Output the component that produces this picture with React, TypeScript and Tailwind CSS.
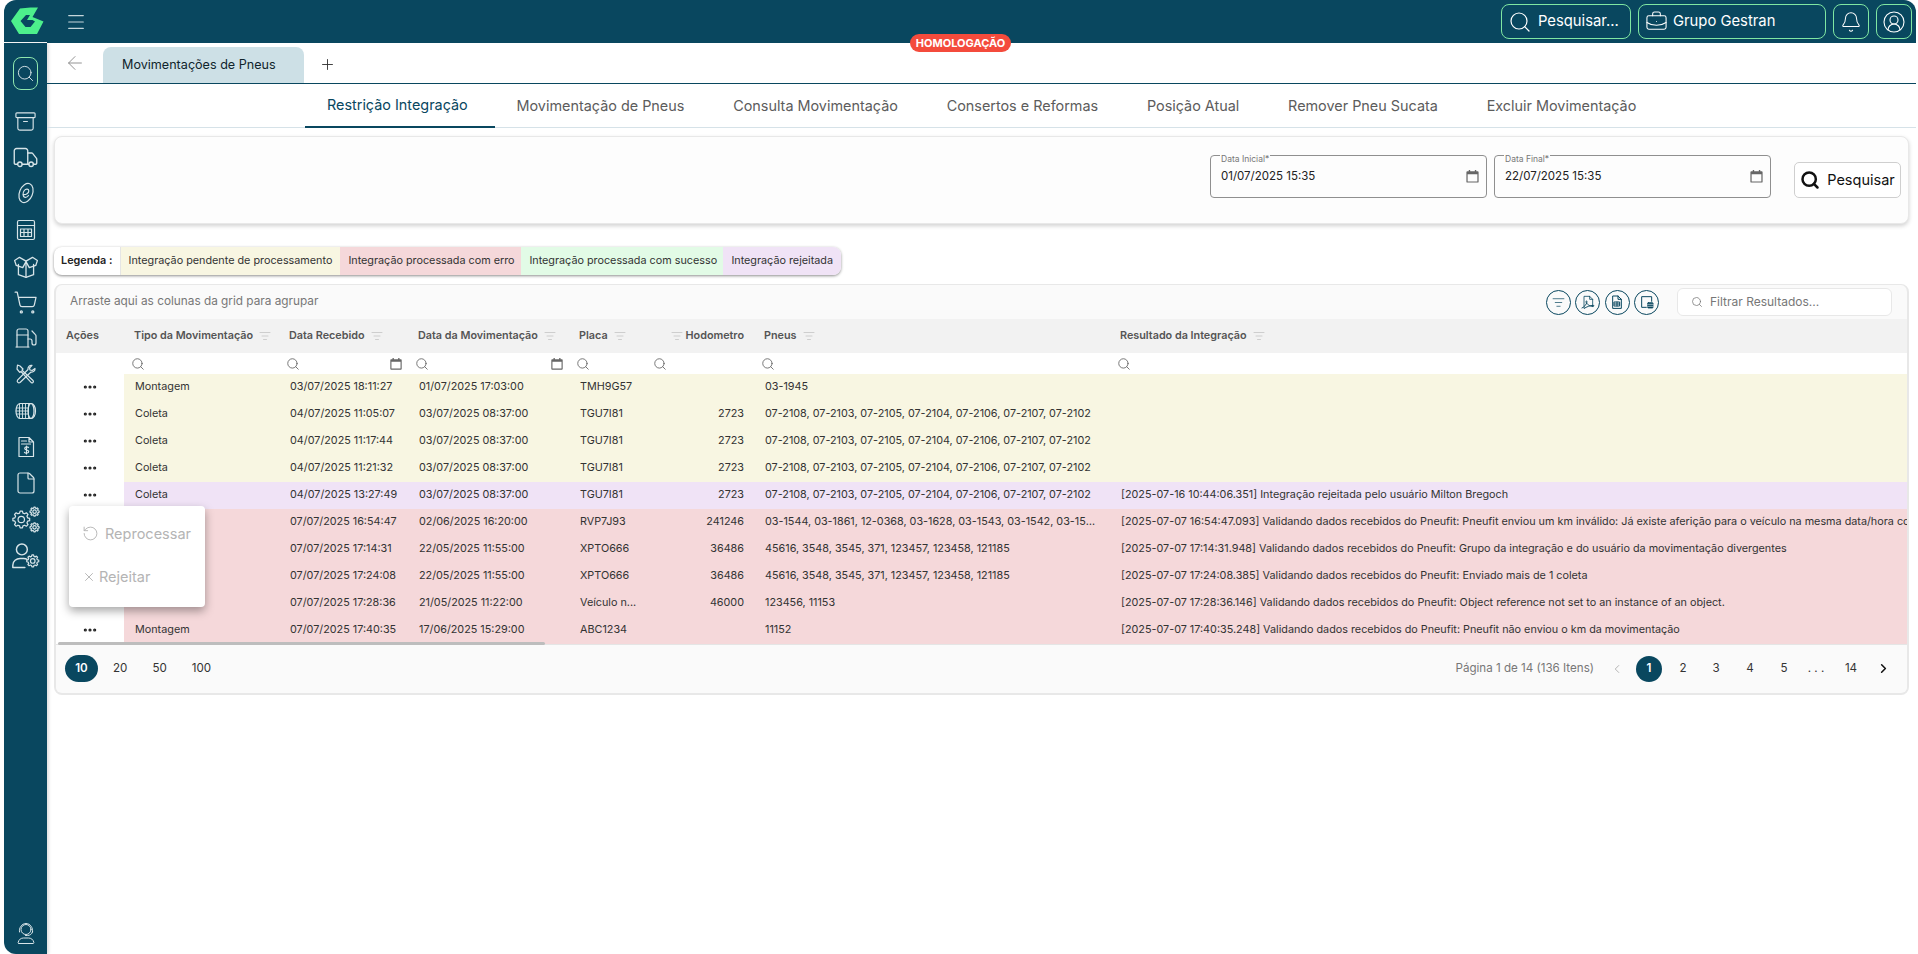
import {
  Archive,
  ArrowLeft,
  Bell,
  BriefcaseBusiness,
  ChevronLeft,
  ChevronRight,
  CircleUserRound,
  Ellipsis,
  File,
  Fuel,
  ListFilter,
  Menu,
  Plus,
  RotateCcw,
  Search,
  ShoppingCart,
  Truck,
  X,
} from "lucide-react";

const COLS = "grid grid-cols-[68px_155px_129px_161px_77px_108px_356px_1fr]";
const DATA_COLS = "grid grid-cols-[155px_129px_161px_77px_108px_356px_1fr]";

type Row = {
  tipo: string;
  rec: string;
  mov: string;
  placa: string;
  km: string;
  pneus: string;
  res: string;
  bg: string;
};

const P7 = "07-2108, 07-2103, 07-2105, 07-2104, 07-2106, 07-2107, 07-2102";
const P5 = "45616, 3548, 3545, 371, 123457, 123458, 121185";
const Y = "bg-[#f8f6e2]";
const V = "bg-[#f0e3f6]";
const R = "bg-[#f5d8da]";

const rows: Row[] = [
  { tipo: "Montagem", rec: "03/07/2025 18:11:27", mov: "01/07/2025 17:03:00", placa: "TMH9G57", km: "", pneus: "03-1945", res: "", bg: Y },
  { tipo: "Coleta", rec: "04/07/2025 11:05:07", mov: "03/07/2025 08:37:00", placa: "TGU7I81", km: "2723", pneus: P7, res: "", bg: Y },
  { tipo: "Coleta", rec: "04/07/2025 11:17:44", mov: "03/07/2025 08:37:00", placa: "TGU7I81", km: "2723", pneus: P7, res: "", bg: Y },
  { tipo: "Coleta", rec: "04/07/2025 11:21:32", mov: "03/07/2025 08:37:00", placa: "TGU7I81", km: "2723", pneus: P7, res: "", bg: Y },
  { tipo: "Coleta", rec: "04/07/2025 13:27:49", mov: "03/07/2025 08:37:00", placa: "TGU7I81", km: "2723", pneus: P7, res: "[2025-07-16 10:44:06.351] Integração rejeitada pelo usuário Milton Bregoch", bg: V },
  { tipo: "", rec: "07/07/2025 16:54:47", mov: "02/06/2025 16:20:00", placa: "RVP7J93", km: "241246", pneus: "03-1544, 03-1861, 12-0368, 03-1628, 03-1543, 03-1542, 03-1545, 03-1546", res: "[2025-07-07 16:54:47.093] Validando dados recebidos do Pneufit: Pneufit enviou um km inválido: Já existe aferição para o veículo na mesma data/hora com outro km", bg: R },
  { tipo: "", rec: "07/07/2025 17:14:31", mov: "22/05/2025 11:55:00", placa: "XPTO666", km: "36486", pneus: P5, res: "[2025-07-07 17:14:31.948] Validando dados recebidos do Pneufit: Grupo da integração e do usuário da movimentação divergentes", bg: R },
  { tipo: "", rec: "07/07/2025 17:24:08", mov: "22/05/2025 11:55:00", placa: "XPTO666", km: "36486", pneus: P5, res: "[2025-07-07 17:24:08.385] Validando dados recebidos do Pneufit: Enviado mais de 1 coleta", bg: R },
  { tipo: "", rec: "07/07/2025 17:28:36", mov: "21/05/2025 11:22:00", placa: "Veículo n...", km: "46000", pneus: "123456, 11153", res: "[2025-07-07 17:28:36.146] Validando dados recebidos do Pneufit: Object reference not set to an instance of an object.", bg: R },
  { tipo: "Montagem", rec: "07/07/2025 17:40:35", mov: "17/06/2025 15:29:00", placa: "ABC1234", km: "", pneus: "11152", res: "[2025-07-07 17:40:35.248] Validando dados recebidos do Pneufit: Pneufit não enviou o km da movimentação", bg: R },
];

function Logo() {
  return (
    <svg width="33" height="28" viewBox="0 0 33 28">
      <path d="M0 14 9 1.5 19.5.5H27L21.500 10 32.500 14.500 26 27H8Z" fill="#4df08c" />
      <path d="M9.500 14 15 8h4l-3 5h5.500L24 14.500 19.500 20h-5Z" fill="#09475f" />
    </svg>
  );
}

function Svg({ children, size = 24 }: { children: React.ReactNode; size?: number }) {
  return (
    <svg width={size} height={size} viewBox="0 0 24 24" fill="none" stroke="currentColor" strokeWidth="1.2" strokeLinecap="round" strokeLinejoin="round">
      {children}
    </svg>
  );
}

const ECircle = () => (
  <Svg>
    <ellipse cx="12" cy="12" rx="6.5" ry="10" transform="rotate(22 12 12)" />
    <path d="M9 13.500c3 .5 6-1.500 5.800-3.800-.2-2-3-2.200-4.500-.2-1.800 2.300-1.800 6.500.7 6.800 1.500.2 2.800-.8 3.500-1.800" />
  </Svg>
);

const CalcBox = () => (
  <Svg>
    <rect x="3.5" y="2.5" width="17" height="19" rx="1.5" />
    <path d="M3.500 7.500h17M6.500 11h11v7.500h-11zM6.500 14.500h11M10 11v7.500M14 11v7.500" />
  </Svg>
);

const OpenBox = () => (
  <Svg size={26}>
    <path d="M5 10.500V20l7 2.500 7-2.500v-9.500" />
    <path d="M12 8v14.500" />
    <path d="M12 7.500 6 4 1.500 7l1.500 4.500L9 13.500 12 8l3 5.500 6-2 1.500-4.500L18 4Z" />
  </Svg>
);

const Tools = () => (
  <Svg>
    <path d="m3.500 3 2.500 1 3 3-1 1.200 11 10.300c1 1 0 3-1.500 2.300L7 9.500 5.700 10.300 3 7z" />
    <path d="M21 6.500c.3 2-1.500 4-4 3.500L6 20.500c-1.500 1-3.500-.5-2.500-2.300L14 7.500c-.5-2.500 1.500-4.500 4-4.200L15.500 6l.5 2 2.200.5z" />
  </Svg>
);

const Tire = () => (
  <Svg>
    <path d="M6 4.500h11c2.500 0 4.500 3.300 4.500 7.500s-2 7.500-4.500 7.500H6C3.700 19.500 2 16 2 12s1.700-7.500 4-7.500Z" />
    <ellipse cx="17" cy="12" rx="3" ry="7.5" />
    <path d="M5.500 5v14M8.500 4.500v15M11.500 4.500v15M14.500 5v14M2.500 9h12M2.200 12h12M2.500 15h12" strokeWidth="0.9" />
  </Svg>
);

const DocMoney = () => (
  <Svg>
    <path d="M5 2.500h10l4.500 4.500v14.500H5zM15 2.500V7h4.500M7.500 6h5M7.500 9h9" />
    <path d="M14.500 12.500c-.6-.8-3.800-1-3.800 1 0 2 4 1 4 3 0 2-3.400 1.800-4.200.8M12.500 11v8" />
  </Svg>
);

// cog outline, built from points so the teeth stay thin
function Gear({ x, y, r }: { x: number; y: number; r: number }) {
  const pts: string[] = [];
  const n = 8;
  for (let i = 0; i < n; i++) {
    const a = (i * 2 * Math.PI) / n;
    const w = Math.PI / n / 2;
    const at = (rad: number, ang: number) => `${x + rad * Math.cos(ang)},${y + rad * Math.sin(ang)}`;
    pts.push(at(r * 0.78, a - w * 1.3), at(r, a - w * 0.7), at(r, a + w * 0.7), at(r * 0.78, a + w * 1.3));
  }
  return (
    <g strokeWidth="1">
      <polygon points={pts.join(" ")} />
      <circle cx={x} cy={y} r={r * 0.38} />
    </g>
  );
}

const Gears = () => (
  <Svg size={29}>
    <Gear x={8.5} y={12} r={7} />
    <Gear x={19.5} y={5.5} r={3.8} />
    <Gear x={19.5} y={18.5} r={3.8} />
  </Svg>
);

const UserGear = () => (
  <Svg size={29}>
    <circle cx="9" cy="7" r="4.5" />
    <path d="M1.500 22v-2c0-3.500 3-5.500 6-5.500h3c1 0 2 .2 2.800.7M1.500 22h10" />
    <Gear x={18} y={16.5} r={5} />
  </Svg>
);

const HeadsetBust = () => (
  <Svg>
    <circle cx="12" cy="8.500" r="5" strokeWidth="1" />
    <path d="M5.500 11c-.8-4 2.200-8.500 6.500-8.500s7.300 4.500 6.500 8.500M18.500 11c-.5 2-2.500 3.500-5 3.500h-2" strokeWidth="1" />
    <path d="M5 22.500h14c.8 0 1-.6.8-1.200-.6-2.800-2.800-4.300-5.300-4.300h-5c-2.500 0-4.700 1.500-5.300 4.300-.2.600 0 1.200.8 1.200Z" strokeWidth="1" />
  </Svg>
);

function Calendar({ size = 15 }: { size?: number }) {
  return (
    <svg width={size} height={size} viewBox="0 0 16 16" className="text-[#666]">
      <path d="M4 1h1.500v1.500h5V1H12v1.500h1.500A1 1 0 0 1 14.500 3.500v10a1 1 0 0 1-1 1h-11a1 1 0 0 1-1-1v-10a1 1 0 0 1 1-1H4Zm-1.200 4.500v7.700h10.400V5.500Z" fill="currentColor" />
    </svg>
  );
}

const PdfIcon = () => (
  <Svg size={16}>
    <path d="M6 21V3.500h8.500L19 8v11M14.500 3.500V8H19" />
    <path d="M3 21c3-1 6.500-5 7.500-9 .4-2-1.500-2-1.500-.5 0 3 6 7.500 11 7 1.500-.2 1-1.800-.5-1.500-4 .5-10 2-13 4.500" strokeWidth="1.4" />
  </Svg>
);

const XlsIcon = () => (
  <Svg size={16}>
    <path d="M5.500 21V3h8l5 5v13zM13.500 3v5h5" strokeWidth="1.5" />
    <path d="M8 12h8v6H8zM8 15h8M12 12v6" strokeWidth="1.5" />
  </Svg>
);

const SheetIcon = () => (
  <Svg size={16}>
    <path d="M11 20H4V4h15v7" strokeWidth="1.5" />
    <rect x="13" y="13" width="8" height="8" rx="1" fill="currentColor" />
    <path d="M13 15.500h8M13 18.500h8" stroke="#fafafa" strokeWidth="0.9" />
  </Svg>
);

const sideIcons = [
  <Archive key="a" size={23} strokeWidth={1.2} />,
  <Truck key="b" size={27} strokeWidth={1.2} />,
  <ECircle key="c" />,
  <CalcBox key="d" />,
  <OpenBox key="e" />,
  <ShoppingCart key="f" size={25} strokeWidth={1.2} />,
  <Fuel key="g" size={24} strokeWidth={1.2} />,
  <Tools key="h" />,
  <Tire key="i" />,
  <DocMoney key="j" />,
  <File key="k" size={24} strokeWidth={1.2} />,
  <Gears key="l" />,
  <UserGear key="m" />,
];

function Sidebar() {
  return (
    <aside className="flex w-[43px] shrink-0 flex-col items-center rounded-bl-xl bg-[#09475f] text-[#d7e4e8] shadow-[2px_0_3px_rgba(0,0,0,0.12)]">
      <div className="mt-[14px] flex h-[33px] w-[25px] items-center justify-center rounded-lg border border-[#8fe6ae]">
        <Search size={19} strokeWidth={1.2} />
      </div>
      <div className="mt-[13px] flex flex-col items-center">
        {sideIcons.map((icon, i) => (
          <div key={i} className="flex h-[36.2px] items-center justify-center">
            {icon}
          </div>
        ))}
      </div>
      <div className="mt-auto mb-[9px]">
        <HeadsetBust />
      </div>
    </aside>
  );
}

function TopBar() {
  const btn = "flex h-[35px] items-center rounded-lg border border-[#7fe6a2] text-white";
  return (
    <header className="flex h-[43px] items-center rounded-t-xl bg-[#09475f] pr-1">
      <div className="flex h-[43px] w-[43px] items-center justify-center border-b border-white pl-[3px]">
        <Logo />
      </div>
      <Menu size={22} strokeWidth={1.2} className="ml-[18px] text-[#c5d6db]" />
      <div className="ml-auto flex items-center gap-[7px]">
        <div className={`${btn} w-[130px] gap-[6px] pl-[6px] text-[14.8px]`}>
          <Search size={24} strokeWidth={1.2} />
          <span>Pesquisar...</span>
        </div>
        <div className={`${btn} w-[188px] gap-[5px] pl-[6px] text-[14.8px]`}>
          <BriefcaseBusiness size={23} strokeWidth={1.1} />
          <span>Grupo Gestran</span>
        </div>
        <div className={`${btn} w-[36px] justify-center`}>
          <Bell size={22} strokeWidth={1.1} />
        </div>
        <div className={`${btn} w-[36px] justify-center`}>
          <CircleUserRound size={24} strokeWidth={1.1} />
        </div>
      </div>
    </header>
  );
}

function TabStrip() {
  return (
    <div className="flex h-[41px] items-end border-b border-[#09475f] pl-[17px]">
      <ArrowLeft size={22} strokeWidth={1} className="mb-[9px] text-[#8a8a8a]" />
      <div className="ml-[17px] flex h-[36px] w-[201px] items-center rounded-t-lg bg-[#cde0e6] pl-[19px] text-[12.6px] text-[#10242c]">
        Movimentações de Pneus
      </div>
      <Plus size={17} strokeWidth={1.3} className="mb-[10px] ml-[15px] text-[#333]" />
    </div>
  );
}

const subTabs = ["Restrição Integração", "Movimentação de Pneus", "Consulta Movimentação", "Consertos e Reformas", "Posição Atual", "Remover Pneu Sucata", "Excluir Movimentação"];

function SubTabs() {
  return (
    <nav className="flex h-[44px] border-b border-[#d6e2e8] pl-[258px] text-[14.4px]">
      {subTabs.map((t, i) => (
        <div
          key={t}
          className={
            i === 0
              ? "-mb-px flex items-center border-b-2 border-[#09475f] pr-[26.8px] pl-[22px] text-[#09475f]"
              : "flex items-center pr-[26.8px] pl-[22px] text-[#5c5c5c]"
          }
        >
          {t}
        </div>
      ))}
    </nav>
  );
}

function DateField({ label, value }: { label: string; value: string }) {
  return (
    <div className="relative flex h-[43px] w-[277px] items-center justify-between rounded-[4px] border border-[#8f8f8f] pr-[6px] pl-[10px] text-[11.5px] text-[#222]">
      <span className="absolute -top-[2px] left-[9px] bg-[#fdfdfd] px-px text-[8.5px] leading-[10px] text-[#777]">{label}</span>
      <span>{value}</span>
      <Calendar />
    </div>
  );
}

function FilterCard() {
  return (
    <section className="mx-[7px] mt-[8px] flex h-[88px] items-start justify-end rounded-lg border border-[#e8e8e8] bg-[#fdfdfd] pt-[18px] pr-[7px] shadow-[0_2px_4px_rgba(0,0,0,0.18)]">
      <div className="flex gap-[7px]">
        <DateField label="Data Inicial*" value="01/07/2025 15:35" />
        <DateField label="Data Final*" value="22/07/2025 15:35" />
      </div>
      <button className="mt-[7px] ml-[23px] flex h-[36px] w-[107px] items-center justify-center gap-[7px] rounded-[5px] border border-[#cfcfcf] bg-white text-[14.5px] text-[#111]">
        <Search size={20} strokeWidth={3} />
        Pesquisar
      </button>
    </section>
  );
}

function Legend() {
  const item = "flex items-center whitespace-nowrap px-[8px]";
  return (
    <div className="mx-[7px] mt-[23px] flex h-[28px] w-[787px] overflow-hidden rounded-lg bg-white text-[10.8px] text-[#333] shadow-[0_1px_3px_rgba(0,0,0,0.45)]">
      <div className="flex w-[67px] items-center justify-center border-r border-[#e5e5e5] font-semibold text-[#222]">Legenda :</div>
      <div className={`${item} w-[220px] bg-[#f8f6e2]`}>Integração pendente de processamento</div>
      <div className={`${item} w-[181px] bg-[#f5d8da]`}>Integração processada com erro</div>
      <div className={`${item} w-[202px] bg-[#e2fbe6]`}>Integração processada com sucesso</div>
      <div className={`${item} flex-1 bg-[#f0e3f6]`}>Integração rejeitada</div>
    </div>
  );
}

function HeaderCell({ label, right }: { label: string; right?: boolean }) {
  return (
    <div className={right ? "flex items-center justify-end gap-[3px] pr-[10px]" : "flex items-center gap-[6px] pl-[10px]"}>
      {right && <ListFilter size={12} strokeWidth={1} className="text-[#aaa]" />}
      <span className="whitespace-nowrap">{label}</span>
      {!right && <ListFilter size={12} strokeWidth={1} className="text-[#aaa]" />}
    </div>
  );
}

function FilterCell({ date }: { date?: boolean }) {
  return (
    <div className="flex items-center justify-between pr-[5px] pl-[7px]">
      <Search size={14} strokeWidth={1.5} className="text-[#666]" />
      {date && <Calendar size={14} />}
    </div>
  );
}

function Grid() {
  const tools = [<ListFilter key="a" size={13} strokeWidth={1.3} />, <PdfIcon key="b" />, <XlsIcon key="c" />, <SheetIcon key="d" />];
  return (
    <section className="mx-[7px] mt-[9px] h-[411px] overflow-hidden rounded-lg border-2 border-t border-[#e8e8e8] bg-[#fafafa] text-[10.8px] text-[#333]">
      <div className="flex h-[34px] items-center px-[14px] text-[11.8px] text-[#777]">
        <span>Arraste aqui as colunas da grid para agrupar</span>
        <div className="ml-auto flex items-center gap-[4.5px]">
          {tools.map((t, i) => (
            <div key={i} className="flex h-[25px] w-[25px] items-center justify-center rounded-full border border-[#09475f] text-[#09475f]">
              {t}
            </div>
          ))}
        </div>
        <div className="mr-px ml-[18px] flex h-[28px] w-[215px] items-center gap-[7px] rounded-md border border-[#e8e8e8] bg-white pl-[13px] text-[12px] text-[#777]">
          <Search size={12} strokeWidth={1.5} />
          Filtrar Resultados...
        </div>
      </div>
      <div className={`${COLS} h-[34px] bg-[#f2f2f2] font-semibold text-[#555]`}>
        <div className="flex items-center pl-[10px]">Ações</div>
        <HeaderCell label="Tipo da Movimentação" />
        <HeaderCell label="Data Recebido" />
        <HeaderCell label="Data da Movimentação" />
        <HeaderCell label="Placa" />
        <HeaderCell label="Hodometro" right />
        <HeaderCell label="Pneus" />
        <HeaderCell label="Resultado da Integração" />
      </div>
      <div className={`${COLS} h-[21px] bg-white`}>
        <div />
        <FilterCell />
        <FilterCell date />
        <FilterCell date />
        <FilterCell />
        <FilterCell />
        <FilterCell />
        <FilterCell />
      </div>
      <div className="relative bg-white">
        {rows.map((r) => (
          <div key={r.rec} className={`${COLS} h-[27px] items-center text-[#333]`}>
            <div className="flex h-full items-center justify-center pr-[1px] pb-[2px]">
              <Ellipsis size={16} strokeWidth={2.8} className="text-[#222]" />
            </div>
            <div className={`col-span-7 h-full ${r.bg} ${DATA_COLS} items-center`}>
              <div className="pl-[11px]">{r.tipo}</div>
              <div className="pl-[11px]">{r.rec}</div>
              <div className="pl-[11px]">{r.mov}</div>
              <div className="pl-[11px]">{r.placa}</div>
              <div className="pr-[10px] text-right">{r.km}</div>
              <div className="truncate pr-[10px] pl-[11px]">{r.pneus}</div>
              <div className="overflow-hidden whitespace-nowrap pl-[11px]">{r.res}</div>
            </div>
          </div>
        ))}
        <div className="absolute top-[132px] left-[13px] z-10 flex h-[101px] w-[136px] flex-col rounded bg-white pl-[13px] text-[14.5px] text-[#b4b4b4] shadow-[0_4px_10px_rgba(0,0,0,0.35)]">
          <div className="mt-[17px] flex items-center gap-[6px]">
            <RotateCcw size={17} strokeWidth={1.3} />
            Reprocessar
          </div>
          <div className="mt-[21px] flex items-center gap-[3px]">
            <X size={14} strokeWidth={1.6} />
            Rejeitar
          </div>
        </div>
      </div>
      <div className="relative flex h-[48px] items-center border-t border-[#e5e5e5] bg-[#fafafa] pr-[16px] pl-[9px] text-[11.6px] text-[#333]">
        <div className="absolute -top-[3px] left-[2px] h-[3px] w-[487px] rounded-full bg-[#bdbdbd]" />
        <div className="flex h-[27px] w-[33px] items-center justify-center rounded-full bg-[#09475f] font-semibold text-white">10</div>
        <span className="ml-[15px]">20</span>
        <span className="ml-[25px]">50</span>
        <span className="ml-[25px]">100</span>
        <span className="mr-[16px] ml-auto text-[#777]">Página 1 de 14 (136 Itens)</span>
        <ChevronLeft size={14} strokeWidth={1.5} className="text-[#aaa]" />
        <div className="ml-[12px] flex h-[26px] w-[26px] items-center justify-center rounded-full bg-[#09475f] font-semibold text-white">1</div>
        <span className="ml-[11px] w-[20px] text-center">2</span>
        <span className="ml-[13px] w-[20px] text-center">3</span>
        <span className="ml-[14px] w-[20px] text-center">4</span>
        <span className="ml-[14px] w-[20px] text-center">5</span>
        <span className="ml-[12px] w-[20px] text-center">. . .</span>
        <span className="ml-[15px] w-[20px] text-center">14</span>
        <ChevronRight size={15} strokeWidth={2.5} className="ml-[15px] text-[#111]" />
      </div>
    </section>
  );
}

export default function App() {
  return (
    <div className="relative h-[954px] overflow-hidden bg-white pr-0.5 pl-1 font-['Inter',sans-serif]">
      <TopBar />
      <div className="flex h-[911px]">
        <Sidebar />
        <main className="min-w-0 flex-1">
          <TabStrip />
          <SubTabs />
          <FilterCard />
          <Legend />
          <Grid />
        </main>
      </div>
      <div className="absolute top-[34px] left-[910px] flex h-[18px] w-[101px] items-center justify-center rounded-full bg-[#f44b3c] text-[11px] font-bold text-white">
        HOMOLOGAÇÃO
      </div>
    </div>
  );
}
